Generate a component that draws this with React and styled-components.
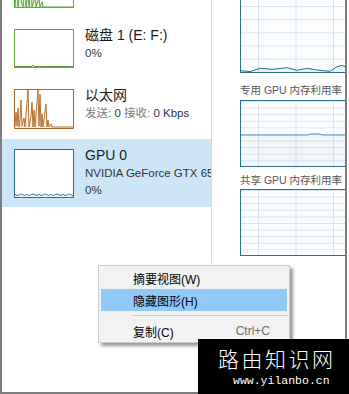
import React from 'react';
import styled, { createGlobalStyle } from 'styled-components';

const GlobalStyle = createGlobalStyle`
  html, body {
    margin: 0;
    padding: 0;
    background: #fff;
  }
  body {
    font-family: "Liberation Sans", "Noto Sans CJK SC", sans-serif;
  }
`;

const Page = styled.div`
  position: relative;
  width: 349px;
  height: 394px;
  overflow: hidden;
  background: #fff;
`;

const Frame = styled.div`
  box-sizing: border-box;
  width: 347px;
  height: 394px;
  border: 2px solid #7d7d7d;
  border-top: none;
  display: flex;
  align-items: flex-start;
  overflow: hidden;
`;

const Sidebar = styled.div`
  width: 209px;
  height: 263px;
  flex-shrink: 0;
  border-right: 1px solid #d9d9d9;
  overflow: hidden;
`;

const List = styled.div`
  margin-top: -41px;
`;

const Row = styled.div`
  box-sizing: border-box;
  display: flex;
  align-items: flex-start;
  gap: 11px;
  height: ${({ $h }) => $h}px;
  padding: 6px 0 0 12px;
  background: ${({ $selected }) => ($selected ? '#cce6f8' : 'transparent')};
`;

const Thumb = styled.div`
  box-sizing: border-box;
  flex-shrink: 0;
  width: 60px;
  height: ${({ $h }) => $h}px;
  margin-top: 4px;
  border: 1px solid ${({ $color }) => $color};
  background: #fff;

  svg {
    display: block;
  }
`;

const Info = styled.div`
  white-space: nowrap;
`;

const Name = styled.div`
  font-size: 14px;
  line-height: 20px;
  color: #1a1a1a;
`;

const Detail = styled.div`
  font-size: 11.5px;
  line-height: 17px;
  color: #333;
`;

const Muted = styled.span`
  color: #7a7a7a;
`;

const Monitor = styled.div`
  flex: 1;
  min-width: 0;
  overflow: hidden;
  padding-left: 28px;
  margin-top: -60px;
`;

const Graph = styled.div`
  box-sizing: border-box;
  width: 130px;
  height: ${({ $h }) => $h}px;
  border: 1px solid #2b6f89;
  background-color: #fbfdfe;
  background-image: linear-gradient(to bottom, #d3e6ee 1px, transparent 1px),
    linear-gradient(to right, #d3e6ee 1px, transparent 1px);
  background-size: 100% ${({ $row }) => $row}px, 37.5px 100%;
  background-position: 0 ${({ $offset }) => $offset}px, 17px 0;

  svg {
    display: block;
  }
`;

const GraphLabel = styled.div`
  font-size: 10.5px;
  line-height: 16px;
  color: #555;
  white-space: nowrap;
  padding-top: ${({ $top }) => $top}px;
  margin-bottom: ${({ $bottom }) => $bottom}px;
`;

const Menu = styled.div`
  position: absolute;
  left: 98px;
  top: 265px;
  width: 192px;
  box-sizing: border-box;
  padding: 1px 1px 0;
  background: #f2f2f2;
  border: 1px solid #cccccc;
  box-shadow: 3px 3px 3px rgba(0, 0, 0, 0.4);
  font-size: 12px;
  color: #000;
`;

const MenuItem = styled.div`
  display: flex;
  align-items: center;
  justify-content: space-between;
  height: 22px;
  margin: 0 1px;
  padding: 0 17px 0 32px;
  background: ${({ $active }) => ($active ? '#91c9f7' : 'transparent')};
`;

const Shortcut = styled.span`
  color: #6d6d6d;
`;

const Separator = styled.div`
  margin: 4px 0 4px 33px;
  border-top: 1px solid #cfcfcf;
`;

const Watermark = styled.div`
  position: absolute;
  right: 0;
  bottom: 0;
  width: 151px;
  height: 55px;
  background: #000;
  color: #fff;
`;

const WatermarkTitle = styled.div`
  font-family: "Noto Sans CJK SC", serif;
  font-weight: 300;
  font-size: 21px;
  letter-spacing: 2.5px;
  line-height: 26px;
  padding: 6px 0 0 20px;
`;

const WatermarkUrl = styled.div`
  font-family: "Liberation Mono", monospace;
  font-size: 11.5px;
  line-height: 14px;
  padding: 3px 0 0 35px;
`;

const pts = (list) => list.map(([x, y]) => `${x},${y}`).join(' ');

const Spark = ({ w, h, points, stroke, fill }) => (
  <svg width={w} height={h}>
    <polygon points={pts([[0, h], ...points, [w, h]])} fill={fill} stroke="none" />
    <polyline points={pts(points)} fill="none" stroke={stroke} strokeWidth="1" />
  </svg>
);

// scrolled-off disk above, only the bottom of its graph shows
const disk0 = [
  [0, 37], [2, 10], [3, 37], [5, 4], [6, 30], [8, 37], [10, 2], [11, 37], [13, 20],
  [14, 37], [16, 8], [17, 37], [19, 30], [20, 15], [21, 37], [24, 28], [25, 37],
  [27, 32], [28, 37], [58, 37],
];

const disk1 = [[0, 36.5], [17, 36.5], [18, 35], [19, 36.5], [58, 36.5]];

const ethernet = [
  [0, 37], [1, 22], [2, 36], [3, 18], [4, 37], [5, 30], [6, 10], [7, 36], [9, 28],
  [10, 37], [13, 0], [14, 37], [16, 26], [17, 12], [18, 37], [19, 20], [20, 37],
  [23, 0], [24, 36], [25, 4], [26, 37], [27, 24], [28, 37], [31, 14], [32, 37],
  [33, 30], [34, 37], [36, 34], [37, 37], [58, 37],
];

const gpuSmall = Array.from({ length: 30 }, (_, i) => {
  const x = i * 2;
  const y = 46 - (i % 3 === 0 ? 2 : i % 2 === 0 ? 1.2 : 0.4);
  return [x, y];
});

const engine = [
  [0, 129.7], [9, 130.6], [19, 127.3], [32, 128.3], [46, 126.7], [56, 129.3],
  [66, 127.3], [76, 129], [89, 130.3], [96, 125.7], [101, 124.3], [104, 125.7], [128, 126],
];

const dedicated = [[0, 34], [66, 34], [70, 33], [78, 33], [82, 34], [128, 34]];

const App = () => (
  <>
    <GlobalStyle />
    <Page>
      <Frame>
        <Sidebar>
          <List>
            <Row $h={60}>
              <Thumb $h={39} $color="#62a83c">
                <Spark w={58} h={37} points={disk0} stroke="#5aa33a" fill="rgba(77,166,12,0.15)" />
              </Thumb>
            </Row>
            <Row $h={60}>
              <Thumb $h={39} $color="#62a83c">
                <Spark w={58} h={37} points={disk1} stroke="#5aa33a" fill="rgba(77,166,12,0.1)" />
              </Thumb>
              <Info>
                <Name>磁盘 1 (E: F:)</Name>
                <Detail>0%</Detail>
              </Info>
            </Row>
            <Row $h={60}>
              <Thumb $h={40} $color="#a9692f">
                <Spark w={58} h={38} points={ethernet} stroke="#b8722f" fill="rgba(200,130,60,0.12)" />
              </Thumb>
              <Info>
                <Name>以太网</Name>
                <Detail>
                  <Muted>发送:</Muted> 0 <Muted>接收:</Muted> 0 Kbps
                </Detail>
              </Info>
            </Row>
            <Row $h={68} $selected>
              <Thumb $h={49} $color="#2b6f89">
                <Spark w={58} h={47} points={gpuSmall} stroke="#3a86a6" fill="rgba(43,111,137,0.08)" />
              </Thumb>
              <Info>
                <Name>GPU 0</Name>
                <Detail>NVIDIA GeForce GTX 650</Detail>
                <Detail>0%</Detail>
              </Info>
            </Row>
          </List>
        </Sidebar>
        <Monitor>
          <Graph $h={133} $row={13.2} $offset={12.2}>
            <Spark w={128} h={131} points={engine} stroke="#2b6f89" fill="rgba(43,111,137,0.07)" />
          </Graph>
          <GraphLabel $top={9} $bottom={2}>专用 GPU 内存利用率</GraphLabel>
          <Graph $h={67} $row={6.6} $offset={0}>
            <Spark w={128} h={65} points={dedicated} stroke="#4f95b3" fill="rgba(43,111,137,0.04)" />
          </Graph>
          <GraphLabel $top={5} $bottom={1}>共享 GPU 内存利用率</GraphLabel>
          <Graph $h={67} $row={6.6} $offset={0} />
        </Monitor>
      </Frame>

      <Menu>
        <MenuItem>摘要视图(W)</MenuItem>
        <MenuItem $active>隐藏图形(H)</MenuItem>
        <Separator />
        <MenuItem>
          <span>复制(C)</span>
          <Shortcut>Ctrl+C</Shortcut>
        </MenuItem>
      </Menu>

      <Watermark>
        <WatermarkTitle>路由知识网</WatermarkTitle>
        <WatermarkUrl>www.yilanbo.cn</WatermarkUrl>
      </Watermark>
    </Page>
  </>
);

export default App;
